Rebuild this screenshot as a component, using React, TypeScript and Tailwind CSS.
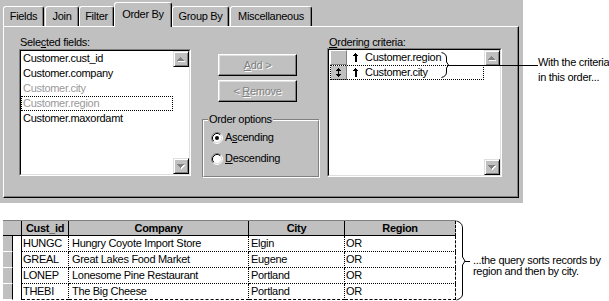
import React from "react";

function UpTri() {
  return (
    <svg width="8" height="5" viewBox="0 0 8 5" shapeRendering="crispEdges">
      <path d="M3 0h1v1h1v1h1v1h1v1H0V3h1V2h1V1h1z" fill="#fff" transform="translate(1,1)" />
      <path d="M3 0h1v1h1v1h1v1h1v1H0V3h1V2h1V1h1z" fill="#808080" />
    </svg>
  );
}

function DownTri() {
  return (
    <svg width="8" height="5" viewBox="0 0 8 5" shapeRendering="crispEdges">
      <path d="M0 0h7v1h-1v1h-1v1h-1v1h-1v-1h-1v-1h-1v-1h-1z" fill="#fff" transform="translate(1,1)" />
      <path d="M0 0h7v1h-1v1h-1v1h-1v1h-1v-1h-1v-1h-1v-1h-1z" fill="#808080" />
    </svg>
  );
}

function ScrollBtn({ down }: { down?: boolean }) {
  return (
    <div className="h-[16px] w-[16px] flex items-center justify-center bg-[#c0c0c0] border border-t-[#dfdfdf] border-l-[#dfdfdf] border-r-black border-b-black shadow-[inset_1px_1px_0_#fff,inset_-1px_-1px_0_#808080]">
      {down ? <DownTri /> : <UpTri />}
    </div>
  );
}

function ScrollBar() {
  return (
    <div className="w-[16px] h-full flex flex-col">
      <ScrollBtn />
      <div className="flex-1 bg-white" />
      <ScrollBtn down />
    </div>
  );
}

function Radio({ checked }: { checked?: boolean }) {
  return (
    <svg width="12" height="12" viewBox="0 0 12 12">
      <circle cx="6" cy="6" r="4.5" fill="#fff" />
      <path d="M2.11 9.89 A5.5 5.5 0 0 1 9.89 2.11" fill="none" stroke="#808080" />
      <path d="M9.89 2.11 A5.5 5.5 0 0 1 2.11 9.89" fill="none" stroke="#fff" />
      <path d="M2.82 9.18 A4.5 4.5 0 0 1 9.18 2.82" fill="none" stroke="#000" />
      <path d="M9.18 2.82 A4.5 4.5 0 0 1 2.82 9.18" fill="none" stroke="#dfdfdf" />
      {checked && <circle cx="6" cy="6" r="2" fill="#000" />}
    </svg>
  );
}

function UpArrow() {
  return (
    <svg width="5" height="9" viewBox="0 0 5 9" shapeRendering="crispEdges">
      <path d="M2 0h1v1h1v1h1v1H3.5V9h-2V3H0V2h1V1h1z" fill="#000" />
    </svg>
  );
}

function UpDown() {
  return (
    <svg width="5" height="9" viewBox="0 0 5 9" shapeRendering="crispEdges">
      <path d="M2 0h1v1h1v1h1v1H3v3h2v1H4v1H3v1H2V8H1V7H0V6h2V3H0V2h1V1h1z" fill="#000" />
    </svg>
  );
}

function Sunken({ className, children }: { className: string; children: React.ReactNode }) {
  return (
    <div className={"border border-t-[#808080] border-l-[#808080] border-r-white border-b-white " + className}>
      <div className="h-full w-full border border-t-black border-l-black border-r-[#dfdfdf] border-b-[#dfdfdf] bg-white flex">
        {children}
      </div>
    </div>
  );
}

const tabs = [
  { label: "Fields", cls: "w-[41px]" },
  { label: "Join", cls: "ml-[1px] w-[34px]" },
  { label: "Filter", cls: "w-[35px]" },
  { label: "Order By", cls: "w-[58px]", sel: true },
  { label: "Group By", cls: "w-[57px]" },
  { label: "Miscellaneous", cls: "ml-[1px] w-[82px]" },
];

const fields: { t: string; dim?: boolean; focus?: boolean }[] = [
  { t: "Customer.cust_id" },
  { t: "Customer.company" },
  { t: "Customer.city", dim: true },
  { t: "Customer.region", dim: true, focus: true },
  { t: "Customer.maxordamt" },
];

const rows = [
  ["HUNGC", "Hungry Coyote Import Store", "Elgin", "OR"],
  ["GREAL", "Great Lakes Food Market", "Eugene", "OR"],
  ["LONEP", "Lonesome Pine Restaurant", "Portland", "OR"],
  ["THEBI", "The Big Cheese", "Portland", "OR"],
];

const btn =
  "h-[22px] w-[79px] ml-[16px] flex items-center justify-center bg-[#c0c0c0] border border-t-white border-l-white border-r-black border-b-black shadow-[inset_-1px_-1px_0_#808080,inset_1px_1px_0_#dfdfdf] text-[#808080] [text-shadow:1px_1px_0_#fff]";

export default function App() {
  return (
    <div className="w-[609px] h-[301px] bg-white overflow-hidden font-['Liberation_Sans',Arial,sans-serif] text-[11px] tracking-[-0.3px] text-black">
      {/* Top: dialog + callout */}
      <div className="relative flex h-[203px]">
        <div className="w-[523px] h-[203px] bg-[#c0c0c0] pl-[3px] flex flex-col shrink-0">
          <div className="flex items-end h-[26px]">
            {tabs.map((t) =>
              t.sel ? (
                <div
                  key={t.label}
                  className={
                    "relative z-10 h-[25px] mb-[-1px] pb-[2px] bg-[#c0c0c0] flex items-center justify-center border-l border-t border-r border-l-white border-t-white border-r-black rounded-t-[3px] shadow-[inset_-1px_0_0_#808080] " +
                    t.cls
                  }
                >
                  {t.label}
                </div>
              ) : (
                <div
                  key={t.label}
                  className={
                    "h-[20px] flex items-center justify-center border-l border-t border-r border-l-white border-t-white border-r-black rounded-t-[3px] shadow-[inset_-1px_0_0_#808080] " +
                    t.cls
                  }
                >
                  {t.label}
                </div>
              )
            )}
          </div>
          <div className="w-[516px] h-[172px] border border-white border-r-black border-b-black shadow-[inset_-1px_-1px_0_#808080] flex pt-[9px] pl-[15px]">
            {/* Column 1 */}
            <div className="w-[172px] flex flex-col">
              <div className="h-[13px] leading-[13px] pl-[1px]">
                Sele<u>c</u>ted fields:
              </div>
              <Sunken className="h-[127px] w-[172px]">
                <div className="flex-1 flex flex-col">
                  {fields.map((f) => (
                    <div
                      key={f.t}
                      className={
                        "h-[15px] leading-[15px] pl-[2px] " +
                        (f.dim ? "text-[#9a9a9a] " : "") +
                        (f.focus ? "outline outline-1 outline-dotted outline-black -outline-offset-1" : "")
                      }
                    >
                      {f.t}
                    </div>
                  ))}
                </div>
                <ScrollBar />
              </Sunken>
            </div>
            {/* Column 2 */}
            <div className="ml-[11px] w-[118px] flex flex-col">
              <div className={"mt-[18px] " + btn}>
                <span>
                  <u>A</u>dd &gt;
                </span>
              </div>
              <div className={"mt-[4px] " + btn}>
                <span>
                  &lt; <u>R</u>emove
                </span>
              </div>
              <div className="relative mt-[17px] h-[59px] border border-[#808080] border-r-white border-b-white">
                <div className="h-full border border-white border-r-[#808080] border-b-[#808080] pt-[6px]">
                  <div className="flex items-center h-[21px] pl-[7px]">
                    <Radio checked />
                    <span className="ml-[2px]">
                      A<u>s</u>cending
                    </span>
                  </div>
                  <div className="flex items-center h-[21px] pl-[7px]">
                    <Radio />
                    <span className="ml-[2px]">
                      <u>D</u>escending
                    </span>
                  </div>
                </div>
                <div className="absolute left-[5px] top-[-7px] px-[1px] bg-[#c0c0c0] leading-[13px]">Order options</div>
              </div>
            </div>
            {/* Column 3 */}
            <div className="ml-[7px] w-[175px] flex flex-col">
              <div className="h-[12px] leading-[12px] pl-[2px]">
                <u>O</u>rdering criteria:
              </div>
              <Sunken className="h-[129px] w-[175px]">
                <div className="flex-1 flex flex-col">
                  <div className="h-[15px] ml-[1px] flex items-center">
                    <div className="w-[17px] h-full bg-[#c0c0c0] border border-t-white border-l-white border-r-[#808080] border-b-[#808080]" />
                    <div className="ml-[6px]">
                      <UpArrow />
                    </div>
                    <span className="ml-[7px] leading-[15px]">Customer.region</span>
                  </div>
                  <div className="h-[15px] ml-[1px] flex items-center outline outline-1 outline-dotted outline-black -outline-offset-1">
                    <div className="w-[17px] h-full bg-[#c0c0c0] border border-t-white border-l-white border-r-[#808080] border-b-[#808080] flex items-center justify-center">
                      <UpDown />
                    </div>
                    <div className="ml-[6px]">
                      <UpArrow />
                    </div>
                    <span className="ml-[7px] leading-[15px]">Customer.city</span>
                  </div>
                </div>
                <ScrollBar />
              </Sunken>
            </div>
          </div>
        </div>
        <div className="ml-[15px] pt-[55px] leading-[15px] whitespace-nowrap">
          <div>With the criteria</div>
          <div>in this order...</div>
        </div>
        {/* Callout brace + leader line over the list */}
        <svg className="absolute left-[438px] top-[50px]" width="100" height="30" viewBox="0 0 100 30">
          <path
            d="M3.5 2.5 C7 3.5 8.5 5 8.5 8 L8.5 12 L10.5 15 L8.5 18 L8.5 22 C8.5 25 7 26.5 3.5 27.5"
            fill="none"
            stroke="#000"
          />
          <path d="M10 15.5 H99.5" stroke="#000" shapeRendering="crispEdges" />
        </svg>
      </div>

      {/* Bottom: result table + callout */}
      <div className="flex mt-[17px] h-[81px]">
        <div className="ml-[3px] flex flex-col">
          <div className="flex h-[16px] bg-[#c0c0c0] border-t border-[#808080] font-bold">
            <div className="w-[19px] border-r border-b border-black" />
            <div className="w-[47px] border-r border-b border-black text-center leading-[14px]">Cust_id</div>
            <div className="w-[180px] border-r border-b border-black text-center leading-[14px]">Company</div>
            <div className="w-[96px] border-r border-b border-black text-center leading-[14px]">City</div>
            <div className="w-[111px] border-r border-b border-black text-center leading-[14px] [border-right-style:dashed]">
              Region
            </div>
          </div>
          {rows.map((r, i) => {
            const last = i === rows.length - 1;
            const cell =
              "border-r border-b border-black border-dotted leading-[15px] whitespace-nowrap overflow-hidden " +
              (last ? "[border-bottom-style:dashed] " : "");
            return (
              <div key={r[0]} className="flex h-[16px]">
                <div className="w-[10px] bg-[#c0c0c0] border-r border-b border-r-black border-b-white" />
                <div className="w-[9px] bg-white border-r border-black" />
                <div className={cell + "w-[47px] pl-[1px]"}>{r[0]}</div>
                <div className={cell + "w-[180px] pl-[3px]"}>{r[1]}</div>
                <div className={cell + "w-[96px] pl-[2px]"}>{r[2]}</div>
                <div className={cell + "w-[111px] pl-[1px] [border-right-style:dashed]"}>{r[3]}</div>
              </div>
            );
          })}
        </div>
        <svg width="15" height="81" viewBox="0 0 15 81" className="shrink-0">
          <path
            d="M0.5 1 C4 2 6.5 4 6.5 8 L6.5 37 L9 41 L6.5 45 L6.5 74 C6.5 77 4 79 0.5 80"
            fill="none"
            stroke="#000"
          />
          <path d="M9 41.5 H14" stroke="#000" shapeRendering="crispEdges" />
        </svg>
        <div className="ml-[2px] mt-[35px] leading-[11px] whitespace-nowrap">
          <div>...the query sorts records by</div>
          <div>region and then by city.</div>
        </div>
      </div>
    </div>
  );
}
